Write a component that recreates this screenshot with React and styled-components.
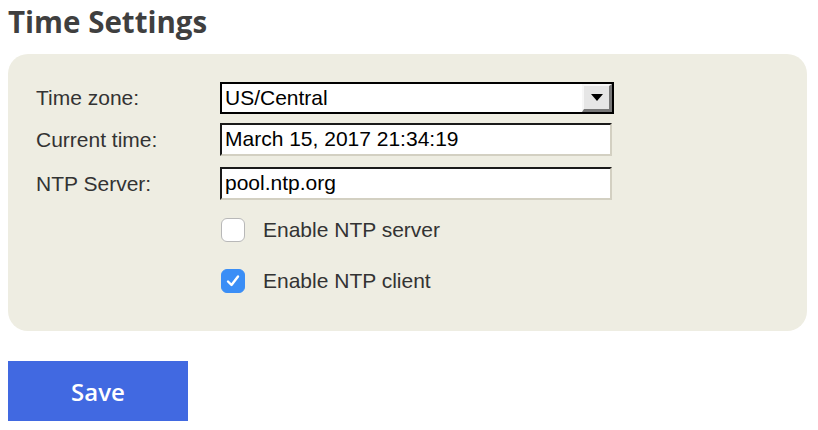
import React from "react";
import styled, { createGlobalStyle } from "styled-components";

const GlobalStyle = createGlobalStyle`
  html, body { margin: 0; padding: 0; background: #ffffff; }
  body { padding: 8px; font-family: "Liberation Sans", Arial, sans-serif; }
  * { box-sizing: border-box; }
`;

const Title = styled.h1`
  margin: -6px 0 0 0;
  height: 52px;
  font-family: "Open Sans", sans-serif;
  font-weight: 700;
  font-size: 29.5px;
  line-height: 40px;
  color: #3f3f3f;
`;

const Panel = styled.div`
  background: #eeede2;
  border-radius: 20px;
  padding: 28px 28px 38px 28px;
  width: 799px;
  display: flex;
  flex-direction: column;
`;

const Row = styled.div`
  display: grid;
  grid-template-columns: 184px 394px;
  align-items: center;
  margin-top: ${(p) => p.$mt || 0}px;
`;

const Label = styled.label`
  font-size: 21px;
  color: #333333;
`;

const SelectBox = styled.div`
  height: 32px;
  width: 394px;
  border: 2px solid #000;
  background: #fff;
  display: flex;
  align-items: stretch;
`;

const SelectText = styled.span`
  flex: 1;
  font-size: 21px;
  color: #000;
  padding-left: 3px;
  line-height: 28px;
`;

const ArrowButton = styled.div`
  width: 30px;
  border-style: solid;
  border-width: 2px 3px 3px 2px;
  border-color: #f7f7f7 #777777 #777777 #f7f7f7;
  background: #e6e6e6;
  display: flex;
  align-items: center;
  justify-content: center;
`;

const Arrow = styled.span`
  width: 0;
  height: 0;
  border-left: 6px solid transparent;
  border-right: 6px solid transparent;
  border-top: 7px solid #000;
`;

const TextField = styled.div`
  height: 33px;
  width: 392px;
  background: #fff;
  border-style: solid;
  border-width: 2px;
  border-color: #1a1a1a #d3d0c2 #d3d0c2 #1a1a1a;
  font-size: 21px;
  color: #000;
  padding-left: 3px;
  line-height: 28px;
  white-space: nowrap;
`;

const CheckRow = styled.div`
  display: flex;
  align-items: center;
  gap: 18px;
  margin-left: 185px;
  margin-top: ${(p) => p.$mt || 0}px;
  font-size: 21px;
  color: #333333;
`;

const Box = styled.span`
  width: 24px;
  height: 24px;
  border-radius: 6px;
  display: inline-flex;
  align-items: center;
  justify-content: center;
  background: ${(p) => (p.$checked ? "#3a8ef6" : "#ffffff")};
  border: 1px solid ${(p) => (p.$checked ? "#3a8ef6" : "#b8b8b8")};
`;

const SaveButton = styled.button`
  margin-top: 30px;
  width: 180px;
  height: 60px;
  background: #4169e1;
  color: #fff;
  border: none;
  font-family: "Open Sans", sans-serif;
  font-weight: 600;
  font-size: 24px;
  padding: 0;
  display: block;
`;

function Checkbox({ checked }) {
  return (
    <Box $checked={checked}>
      {checked && (
        <svg width="16" height="16" viewBox="0 0 16 16">
          <path d="M3 8.5 L6.5 12 L13 3.5" fill="none" stroke="#fff" strokeWidth="2.4" strokeLinecap="round" strokeLinejoin="round" />
        </svg>
      )}
    </Box>
  );
}

export default function App() {
  return (
    <>
      <GlobalStyle />
      <Title>Time Settings</Title>
      <Panel>
        <Row>
          <Label>Time zone:</Label>
          <SelectBox>
            <SelectText>US/Central</SelectText>
            <ArrowButton>
              <Arrow />
            </ArrowButton>
          </SelectBox>
        </Row>
        <Row $mt={9}>
          <Label>Current time:</Label>
          <TextField>March 15, 2017 21:34:19</TextField>
        </Row>
        <Row $mt={11}>
          <Label>NTP Server:</Label>
          <TextField>pool.ntp.org</TextField>
        </Row>
        <CheckRow $mt={18}>
          <Checkbox />
          <span>Enable NTP server</span>
        </CheckRow>
        <CheckRow $mt={27}>
          <Checkbox checked />
          <span>Enable NTP client</span>
        </CheckRow>
      </Panel>
      <SaveButton>Save</SaveButton>
    </>
  );
}
